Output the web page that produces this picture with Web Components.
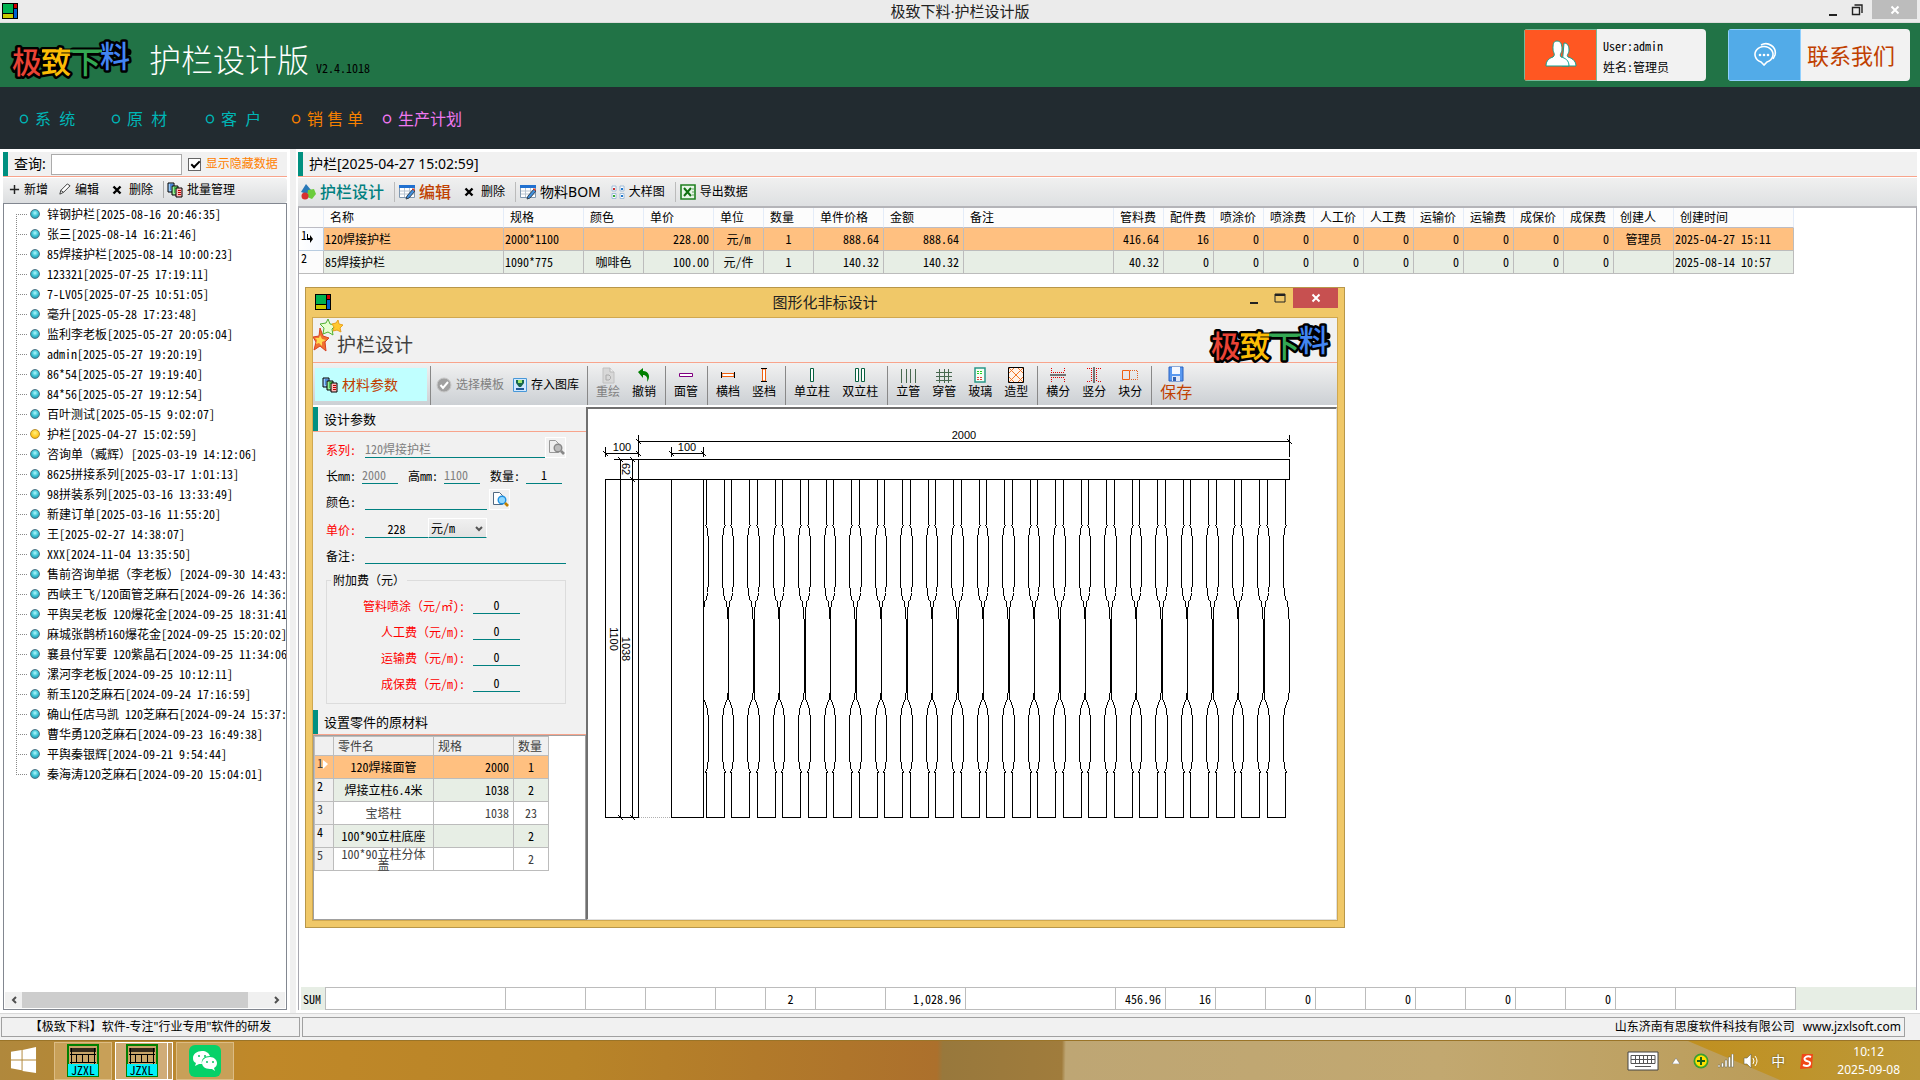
<!DOCTYPE html>
<html lang="zh-CN">
<head>
<meta charset="utf-8">
<title>极致下料·护栏设计版</title>
<style>
    html, body { height: 100%; }
    body {
        margin: 0;
        overflow: hidden;
        background: #fff;
        color: #000;
        font: 12px/16px "Noto Sans", "Noto Sans CJK SC", sans-serif;
        --mono: "Noto Sans Mono CJK SC", "Noto Sans CJK SC", monospace;
        --teal: #009080;
        --salmon: #f8a48c;
        --rust: #c04000;
    }
</style>
</head>
<body>
<jz-app></jz-app>
<script>
const ICONS = {
    app: ['0 0 16 16', '<path fill="#000" d="M0 0h16v16H0z"/><path fill="#00b050" d="M1 1h10v9H1z"/><path fill="#d00000" d="M12 1h3v4h-3z"/><path fill="#0060d0" d="M12 6h3v9h-3z"/><path fill="#c8c800" d="M1 11h10v4H1z"/>'],
    plus: ['0 0 12 12', '<path d="M6 1v10M1 6h10" stroke="#222" stroke-width="1.6"/>'],
    pencil: ['0 0 14 14', '<path d="M2 12l1-4 7-7 3 2-7 7z M3 8l3 2" fill="#fff" stroke="#333"/>'],
    cross: ['-3 0 16 10', '<path d="M1.5 1.5l7 7M8.500 1.500l-7 7" stroke="#000" stroke-width="2.4"/>'],
    batch: ['0 0 16 16', '<g stroke="#000"><path fill="#9cf" d="M1 1h6v9H1z"/><path fill="#9e9" d="M5 4h6v9H5z"/><path fill="#fbb" d="M9 6h6v9H9z"/></g><path d="M3 3h3M3 5h1M3 7h1" stroke="#04a"/><path d="M7 6h3M7 8h1M7 10h1" stroke="#080"/><path d="M11 8.500h3M11 10.500h3M11 12.500h3" stroke="#b00"/>'],
    shapes: ['0 0 16 16', '<path d="M6 0l5 6-4 4-6-2z" fill="#2878b8"/><path d="M8 6l6-1 2 5-4 5-5-2z" fill="#6ccc3c"/><circle cx="5" cy="12" r="3.500" fill="#d83030"/>'],
    sheet: ['0 0 16 16', '<path d="M.5 1.500h15v12H.5z" fill="#fff" stroke="#8098b0"/><path d="M0 1h16v3H0z" fill="#2070d0"/><path d="M1 7h14M1 10h14M5.500 4v9M10.500 4v9" stroke="#b8c4d0"/><path d="M7 15l1-3 6-7 2 2-6 7z" fill="#4090e0" stroke="#345"/><path d="M13 5l1-1 2 2-1 1z" fill="#e84020"/>'],
    dots: ['0 0 14 14', '<g fill="#fff" stroke="#a0bcd8"><path d="M1 1h4v5H1zM9 1h4v5H9zM1 8.500h4v5H1zM9 8.500h4v5H9z"/></g><path d="M2 3h2v2H2z" fill="#c33"/><path d="M10 3h2v2h-2z" fill="#27c"/><path d="M2 10h2v2H2z" fill="#3a3"/><path d="M10 10h2v2h-2z" fill="#27c"/>'],
    excel: ['0 0 16 16', '<path d="M1 1h14v14H1z" fill="#e8f6e8" stroke="#208020" stroke-width="1.600"/><path d="M4 4l7 8M11 4l-7 8" stroke="#107010" stroke-width="2"/><path d="M12 5h2M12 8h2M12 11h2" stroke="#60a060"/>'],
    check: ['0 0 16 16', '<circle cx="8" cy="8" r="7" fill="#a0a0a0" stroke="#c8c8c8"/><path d="M4.500 8l2.500 3 5-6" fill="none" stroke="#fff" stroke-width="2"/>'],
    store: ['0 0 14 16', '<path d="M.5 1.500h13v13H.5z" fill="#d0e8ff" stroke="#4898d8"/><path d="M3 3h8v3l-3 4h-2L3 6z" fill="#186850"/><path d="M5 3h4v3H5z" fill="#a0e870"/><path d="M3 11h8v2H3z" fill="#205898"/>'],
    redraw: ['0 0 18 18', '<path d="M4 2h7l4 4v11H4z" fill="#d8d8d8" stroke="#c0c0c0"/><path d="M11 2v4h4" fill="#eee" stroke="#b8b8b8"/><path d="M7 9h3l1.500 1.500v2L10 14H7z" fill="none" stroke="#aaa"/>'],
    undo: ['0 0 18 18', '<path d="M3 6l5-4v3c6 0 8 6 4 11 1-5-1-7-4-7v3z" fill="#008000"/>'],
    rail: ['0 0 18 18', '<path d="M2.500 7.500h13v3h-13z" fill="#fff" stroke="#800080"/>'],
    hbar: ['0 0 18 18', '<path d="M3 7.500h12v3H3z" fill="#fff" stroke="#f06010"/><path d="M2.500 6v6M15.500 6v6" stroke="#000"/>'],
    vbar: ['0 0 18 18', '<path d="M7.500 3h3v12h-3z" fill="#fff" stroke="#f06010"/><path d="M6 2.500h6M6 15.500h6" stroke="#000"/>'],
    post: ['0 0 18 18', '<path d="M7.500 2.500h3v13h-3z" fill="#fff" stroke="#086040"/>'],
    posts: ['0 0 18 18', '<path d="M4.500 2.500h3v13h-3zM10.500 2.500h3v13h-3z" fill="#fff" stroke="#086040"/>'],
    pipes: ['0 0 18 18', '<path d="M2.500 3v14M7.500 3v14M11.500 3v14M16.500 3v14" stroke="#486850"/>'],
    mesh: ['0 0 18 18', '<path d="M4.500 3v14M9.500 3v14M13.500 3v14M1 6.500h16M1 10.500h16M1 14.500h16" stroke="#486850"/>'],
    glass: ['0 0 18 18', '<path d="M4 2h10v14H4z" fill="#f4fff4" stroke="#289888" stroke-width="1.500"/><path d="M6 5.500h6M6 7.500h6" stroke="#20d020" stroke-dasharray="2 1"/><path d="M6 11.500h6M6 13.500h6" stroke="#e04040" stroke-dasharray="2 1"/>'],
    shape: ['0 0 18 18', '<path d="M1.500 1.500h15v15h-15z" fill="#fff3ea" stroke="#000"/><path d="M2 7l5-5M2 16L16 2M11 16l5-5M11 2l5 5M2 2l14 14M2 11l5 5" stroke="#f07828"/>'],
    hsplit: ['0 0 18 18', '<path d="M2.500 2v4M2 6.500h14M15.500 2v4M2.500 16v-4M2 11.500h14M15.500 16v-4" stroke="#e00000" stroke-dasharray="1 1"/><path d="M1 9h16" stroke="#000"/>'],
    vsplit: ['0 0 18 18', '<path d="M2 2.500h4M6.500 2v14M2 15.500h4M16 2.500h-4M11.500 2v14M16 15.500h-4" stroke="#e00000" stroke-dasharray="1 1"/><path d="M9 1v16" stroke="#000"/>'],
    bsplit: ['0 0 18 18', '<path d="M1.500 4.500h7v9h-7z" fill="none" stroke="#f06010"/><path d="M9 4.500h7.500v9H9" fill="none" stroke="#e06020" stroke-dasharray="1 1"/>'],
    save: ['0 0 16 16', '<path d="M1 1h14v14H1z" fill="#5898f0" stroke="#2860c0"/><path d="M4 1h8v7H4z" fill="#f4f8ff"/><path d="M4 10h8v5H4z" fill="#e0e8f8"/><path d="M5 11h3v4H5z" fill="#3060b0"/>'],
    find: ['0 0 18 18', '<path d="M2.500 1.500h6l3 3v9h-9z" fill="#fff" stroke="#506880"/><circle cx="11" cy="9" r="3.800" fill="#90d8ff" stroke="#2090e0" stroke-width="1.400"/><path d="M14 12l3 3" stroke="#c08000" stroke-width="2.600"/>'],
    findoff: ['0 0 18 18', '<path d="M2.500 1.500h6l3 3v9h-9z" fill="#eee" stroke="#999"/><circle cx="11" cy="9" r="3.800" fill="#bbb" stroke="#888" stroke-width="1.400"/><path d="M14 12l3 3" stroke="#888" stroke-width="2.600"/>'],
    stars: ['0 0 30 34', '<path d="M7 10l3 8 6 2-4 4 1 9-6-5-6 4 2-8-3-5 6-1z" fill="#f07030" stroke="#d84020"/><path d="M7 17l2 4 4 1-4 2v4l-3-3-3 1 1-4-2-2h4z" fill="#ffd850"/><path d="M15 1l2 5 6 1-4 4 1 6-5-3-5 2 1-6-4-4 6-1z" fill="#e8ffd0" stroke="#50b030"/><path d="M25 2l1 4 4 1-3 3 1 4-4-2-4 1 1-4-2-3 4-1z" fill="#ffc830" stroke="#e8a020"/>'],
    users: ['0 0 32 32', '<path d="M19 4c4 0 5 4 5 7 0 4-3 5-1 7 3 1 8 3 8 9H17z" fill="#fff" stroke="#10a090"/><path d="M12 2c4 0 5 4 5 8s-3 5-1 8c4 1 8 3 8 9H1c0-6 4-8 7-9 3-3 0-4 0-8s0-8 4-8z" fill="#fff" stroke="#10a090"/>'],
    chat: ['0 0 26 26', '<g fill="none" stroke="#fff" stroke-width="1.600"><path d="M12 23l-3-3a9 8 0 1 1 6 0z"/><path d="M9 3c7-4 16 2 14 10l-2 4"/></g><g fill="#fff"><circle cx="8" cy="13" r="1.300"/><circle cx="12" cy="13" r="1.300"/><circle cx="16" cy="13" r="1.300"/></g>'],
    windows: ['0 0 28 28', '<path fill="#fff" d="M1 5l11-2v10H1zM13 3l14-3v13H13zM1 14h11v10L1 22zM13 14h14v13l-14-2z"/>'],
    wechat: ['0 0 32 32', '<rect width="32" height="32" rx="6" fill="#06d168"/><path fill="#fff" d="M13 6c-5 0-9 3-9 7 0 3 1 4 3 5l-1 3 4-2h3c-1-5 2-8 8-8-1-3-4-5-8-5z"/><path fill="#fff" d="M21 12c-5 0-8 3-8 6s3 6 8 6h2l3 2-1-3c2-1 3-3 3-5 0-3-3-6-7-6z"/><g fill="#06c060"><circle cx="10" cy="11" r="1"/><circle cx="16" cy="11" r="1"/><circle cx="18" cy="17" r="1"/><circle cx="24" cy="17" r="1"/></g>'],
    fence: ['0 0 32 20', '<path d="M1 21V1h30v20" fill="#c8a468" stroke="#008000" stroke-width="2"/><g stroke="#000" fill="none"><path d="M3 5h26M3 7h26" stroke-width="1.500"/><path d="M3 10.500h26M3 18.500h26M4.500 4v16M9.500 10v9M15.500 10v9M21.500 10v9M27.500 4v16"/></g>'],
    keyboard: ['0 0 32 20', '<path d="M1 1h30v18H1z" fill="#fff" stroke="#444"/><path d="M4 4.500h24v8H4zM4 8.500h24M8.500 4v9M12.500 4v9M16.500 4v9M20.500 4v9M24.500 4v9M8 15.500h16" fill="none" stroke="#555"/>'],
    up: ['0 0 8 6', '<path d="M0 6l4-6 4 6z" fill="#fff" stroke="#666" stroke-width=".5"/>'],
    shield: ['0 0 16 16', '<circle cx="8" cy="8" r="7.500" fill="#38a030"/><circle cx="8" cy="8" r="5.800" fill="#ffe000"/><path d="M8 4v8M4 8h8" stroke="#186018" stroke-width="2"/>'],
    signal: ['0 0 16 14', '<g fill="#fff" stroke="#665" stroke-width=".5"><path d="M0 11h2v2H0zM3.500 9h2v4h-2zM7 6h2v7H7zM10.500 3h2v10h-2zM13.500 0h2v13h-2z"/></g>'],
    volume: ['0 0 16 16', '<path d="M1 5h3l4-4v14l-4-4H1z" fill="#fff" stroke="#665" stroke-width=".6"/><path d="M10 5q2 3 0 6M12 3q4 5 0 10" fill="none" stroke="#fff"/>'],
    sogou: ['0 0 14 16', '<path d="M2 1l11 0-1 14-12 1z" fill="#f04818"/><path d="M11 4C7 2 3 5 5 7s6 1 5 4-5 2-7 1" fill="none" stroke="#fff" stroke-width="2"/>'],
    min: ['0 0 10 14', '<path d="M1 11h8v2H1z" fill="#222"/>'],
    restore: ['0 0 12 12', '<path d="M1.500 3.500h7v7h-7zM3.500 1h7.500v8" fill="none" stroke="#222" stroke-width="1.400"/>'],
    max: ['0 0 12 12', '<path d="M1 2h10v8H1z" fill="none" stroke="#222"/><path d="M1 2h10v2H1z" fill="#222"/>'],
    close: ['0 0 10 10', '<path d="M1.500 1.500l7 7M8.500 1.500l-7 7" stroke="#fff" stroke-width="2"/>'],
};

function icon(name, w = 16, h = w) {
    const [box, body] = ICONS[name];
    return `<svg class="icon" aria-hidden="true" width="${w}" height="${h}" viewBox="${box}">${body}</svg>`;
}

const base = /*css*/`
    * { box-sizing: border-box; }
    svg { display: block; flex: none; }
    button, input, select { font: inherit; color: inherit; margin: 0; border-radius: 0; }
    button { padding: 0; border: 0; background: none; display: flex; align-items: center; justify-content: center; white-space: nowrap; }
    a { color: inherit; text-decoration: none; }
    ul { list-style: none; margin: 0; padding: 0; }
`;

class JzElement extends HTMLElement {
    constructor() {
        super();
        this.attachShadow({ mode: 'open' });
    }
    connectedCallback() {
        const template = document.createElement('template');
        template.innerHTML = `<style>${base}${this.css()}</style>${this.html()}`;
        this.shadowRoot.replaceChildren(template.content.cloneNode(true));
    }
    css() { return ''; }
    html() { return '<slot></slot>'; }
}

class JzLogo extends JzElement {
    css() {
        return /*css*/`
            :host { display: block; }
            svg { overflow: visible; }
            text { font: 500 30px "Noto Sans CJK SC", sans-serif; paint-order: stroke; stroke: #000; stroke-width: 5px; stroke-linejoin: round; }
            .edge { stroke: #000; stroke-width: 7px; stroke-linecap: round; }
            .beam { stroke-width: 3px; }
        `;
    }
    html() {
        return `
            <svg width="124" height="50" viewBox="0 0 124 50">
                <path class="edge" d="M32 18h86"/>
                <text x="2" y="39" fill="#ea4335">极</text>
                <text x="31" y="39" fill="#fbbc05">致</text>
                <text x="61" y="39" fill="#34a853">下</text>
                <text x="90" y="33" fill="#4285f4">料</text>
                <path class="beam" stroke="#fbbc05" d="M32 17h28"/>
                <path class="beam" stroke="#34a853" d="M60 17h32"/>
            </svg>
        `;
    }
}

class JzTitleBar extends JzElement {
    css() {
        const dialog = this.hasAttribute('dialog');
        return /*css*/`
            :host {
                display: grid;
                grid-template-columns: 1fr auto 1fr;
                height: ${dialog ? 29 : 23}px;
                background: ${dialog ? '#f0c868' : '#ebebeb'};
                border-bottom: ${dialog ? 0 : 1}px solid #dcdcdc;
                color: #222;
            }
            .left { padding: ${dialog ? '6px 0 0 3px' : '3px 0 0 2px'}; }
            .name { font-size: 15px; line-height: ${dialog ? 28 : 22}px; }
            .right { display: flex; justify-content: flex-end; }
            button { width: ${dialog ? 26 : 24}px; height: ${dialog ? 20 : 19}px; }
            button:last-child { width: 45px; background: ${dialog ? '#c75050' : '#bcbcbc'}; margin: 0 ${dialog ? 0 : 3}px 0 ${dialog ? 0 : 3}px; }
        `;
    }
    html() {
        const dialog = this.hasAttribute('dialog');
        return `
            <div class="left">${icon('app')}</div>
            <div class="name"><slot></slot></div>
            <div class="right">
                <button aria-label="最小化">${icon('min', 10, 14)}</button>
                <button aria-label="最大化">${icon(dialog ? 'max' : 'restore', 12)}</button>
                <button aria-label="关闭">${icon('close', 10)}</button>
            </div>
        `;
    }
}

class JzHeader extends JzElement {
    css() {
        return /*css*/`
            :host { display: flex; align-items: flex-start; height: 64px; padding: 6px 10px 0; background: #217346; }
            jz-logo { margin: 5px 15px 0 0; }
            h1 { margin: 0; font: 300 32px/58px "Noto Sans CJK SC", sans-serif; color: #fff; }
            .ver { font-family: var(--mono); margin: 31px auto 0 7px; }
            .card {
                display: flex;
                height: 52px;
                border-radius: 4px;
                overflow: hidden;
                background: #f2f2f2;
            }
            .card .pic { display: flex; align-items: center; justify-content: center; width: 73px; height: 52px; border: 1px solid #78b898; }
            .user { width: 182px; margin-right: 22px; }
            .user .pic { background: #ff5722; }
            .user p { margin: 0; padding: 6px; font: 12px/21px var(--mono); }
            .contact { width: 182px; justify-content: flex-start; color: var(--rust); font-size: 22px; }
            .contact .pic { background: #52abe8; border-color: #90d0ff; margin-right: 6px; }
        `;
    }
    html() {
        return `
            <jz-logo></jz-logo>
            <h1>护栏设计版</h1>
            <span class="ver">V2.4.1018</span>
            <div class="card user">
                <span class="pic">${icon('users', 32)}</span>
                <p>User:admin<br>姓名:管理员</p>
            </div>
            <button class="card contact"><span class="pic">${icon('chat', 26)}</span>联系我们</button>
        `;
    }
}

class JzNav extends JzElement {
    css() {
        return /*css*/`
            :host { display: block; background: #222b30; }
            nav {
                display: grid;
                grid-template-columns: 92px 94px 86px 91px auto;
                height: 62px;
                padding: 1px 0 0 20px;
                align-items: center;
                color: #00b5b5;
                font-size: 16px;
            }
            a { display: flex; align-items: center; gap: 7px; white-space: pre; }
            i { font: 8px/16px "Noto Sans CJK SC", sans-serif; -webkit-text-stroke: 1px currentColor; }
            .sale { color: #f78000; }
            .plan { color: #f078f0; }
        `;
    }
    html() {
        return `
            <nav>
                <a href="#sys"><i>○</i>系  统</a>
                <a href="#raw"><i>○</i>原  材</a>
                <a href="#client"><i>○</i>客  户</a>
                <a href="#sale" class="sale"><i>○</i>销 售 单</a>
                <a href="#plan" class="plan"><i>○</i>生产计划</a>
            </nav>
        `;
    }
}

class JzSection extends JzElement {
    css() {
        return /*css*/`
            :host {
                display: flex;
                align-items: center;
                height: 25px;
                padding-left: 11px;
                background: linear-gradient(90deg, var(--teal) 5px, #f1f1f1 5px);
                border-bottom: 1px solid var(--salmon);
                font-size: 14px;
            }
            :host([small]) { font-size: 13px; }
        `;
    }
}

class JzTool extends JzElement {
    css() {
        return /*css*/`
            :host { display: block; }
            button { gap: 4px; height: 100%; }
            :host([stack]) button { flex-direction: column; gap: 0; padding: 2px 6px 0; justify-content: flex-start; }
            button:disabled { color: #808080; }
        `;
    }
    html() {
        const [w, h] = (this.getAttribute('size') || '16').split(',').map(Number);
        const off = this.hasAttribute('disabled') ? 'disabled' : '';
        return `<button ${off}>${icon(this.getAttribute('icon'), w, h || w)}<slot></slot></button>`;
    }
}

const ORDERS = [
    '锌钢护栏[2025-08-16 20:46:35]',
    '张三[2025-08-14 16:21:46]',
    '85焊接护栏[2025-08-14 10:00:23]',
    '123321[2025-07-25 17:19:11]',
    '7-LV05[2025-07-25 10:51:05]',
    '毫升[2025-05-28 17:23:48]',
    '监利李老板[2025-05-27 20:05:04]',
    'admin[2025-05-27 19:20:19]',
    '86*54[2025-05-27 19:19:40]',
    '84*56[2025-05-27 19:12:54]',
    '百叶测试[2025-05-15 9:02:07]',
    '护栏[2025-04-27 15:02:59]',
    '咨询单（臧辉）[2025-03-19 14:12:06]',
    '8625拼接系列[2025-03-17 1:01:13]',
    '98拼装系列[2025-03-16 13:33:49]',
    '新建订单[2025-03-16 11:55:20]',
    '王[2025-02-27 14:38:07]',
    'XXX[2024-11-04 13:35:50]',
    '售前咨询单据（李老板）[2024-09-30 14:43:',
    '西峡王飞/120面管芝麻石[2024-09-26 14:36:',
    '平舆吴老板 120爆花金[2024-09-25 18:31:41',
    '麻城张鹊桥160爆花金[2024-09-25 15:20:02]',
    '襄县付军要 120紫晶石[2024-09-25 11:34:06',
    '漯河李老板[2024-09-25 10:12:11]',
    '新玉120芝麻石[2024-09-24 17:16:59]',
    '确山任店马凯 120芝麻石[2024-09-24 15:37:',
    '曹华勇120芝麻石[2024-09-23 16:49:38]',
    '平舆秦银辉[2024-09-21 9:54:44]',
    '秦海涛120芝麻石[2024-09-20 15:04:01]',
];

class JzTree extends JzElement {
    css() {
        return /*css*/`
            :host {
                display: flex;
                flex-direction: column;
                min-height: 0;
                overflow: hidden;
                border: 1px solid #828790;
                background: #fff;
                font-family: var(--mono);
            }
            ul { flex: 1; min-height: 0; overflow: hidden; }
            li { display: flex; align-items: center; height: 20px; padding-left: 12px; white-space: pre; }
            .stem {
                flex: none;
                width: 12px;
                height: 20px;
                margin-right: 2px;
                background:
                    repeating-linear-gradient(#888 0 1px, transparent 1px 2px) 0 0 / 1px 100% no-repeat,
                    repeating-linear-gradient(90deg, #888 0 1px, transparent 1px 2px) 0 10px / 100% 1px no-repeat;
            }
            li:first-child .stem { background-size: 1px 10px, 100% 1px; background-position: 0 10px, 0 10px; }
            li:last-child .stem { background-size: 1px 10px, 100% 1px; }
            .ball {
                flex: none;
                width: 10px;
                height: 10px;
                margin-right: 7px;
                border: 1px solid #507888;
                border-radius: 5px;
                background: radial-gradient(circle at 4px 3px, #b0f8ff, #38c0d0 50%, #188098);
            }
            .on .ball { border-color: #b89030; background: radial-gradient(circle at 4px 3px, #fff080, #ffc820 60%, #d89000); }
            .bar { display: flex; height: 16px; margin: 0 1px 1px; background: #f0f0f0; }
            .bar button { width: 17px; }
            .bar .thumb { flex: 1; margin-right: 20px; background: #cdcdcd; }
            .bar path { fill: none; stroke: #505050; stroke-width: 2; }
        `;
    }
    html() {
        const rows = ORDERS.map(name => `
            <li class="${name.startsWith('护栏') ? 'on' : ''}"><i class="stem"></i><i class="ball"></i><span>${name}</span></li>`);
        return `
            <ul>${rows.join('')}</ul>
            <div class="bar">
                <button aria-label="向左"><svg width="6" height="8"><path d="M5 1L2 4l3 3"/></svg></button>
                <div class="thumb"></div>
                <button aria-label="向右"><svg width="6" height="8"><path d="M1 1l3 3-3 3"/></svg></button>
            </div>
        `;
    }
}

class JzSidebar extends JzElement {
    css() {
        return /*css*/`
            :host { display: flex; flex-direction: column; }
            label { white-space: nowrap; }
            .query { width: 131px; height: 21px; margin: 0 6px 0 5px; border: 1px solid #ababab; background: #fff; }
            .show { display: flex; align-items: center; gap: 5px; font-size: 12px; color: #ff8000; }
            .show input {
                appearance: none;
                width: 13px;
                height: 13px;
                border: 1px solid #666;
                background: #fff;
            }
            .show input:checked::after { content: ""; display: block; width: 7px; height: 3px; margin: 2px; border: solid #000; border-width: 0 0 2px 2px; transform: rotate(-45deg); }
            .tools { display: flex; height: 25px; margin-top: 1px; padding: 0 0 2px 6px; background: linear-gradient(#f3f3f3, #dcdee0); border-radius: 0 3px 3px 0; }
            .tools jz-tool { margin-right: 10px; }
            .sep { width: 1px; margin: 3px 3px 3px 0; background: #aaa; }
            jz-tree { flex: 1; }
        `;
    }
    html() {
        return `
            <jz-section>
                <label for="q">查询:</label><input id="q" class="query" type="text">
                <label class="show"><input type="checkbox" checked>显示隐藏数据</label>
            </jz-section>
            <div class="tools">
                <jz-tool icon="plus" size="11">新增</jz-tool>
                <jz-tool icon="pencil" size="13">编辑</jz-tool>
                <jz-tool icon="cross" size="16,10">删除</jz-tool>
                <div class="sep"></div>
                <jz-tool icon="batch">批量管理</jz-tool>
            </div>
            <jz-tree></jz-tree>
        `;
    }
}

// [title, width, align]
const COLS = [
    ['名称', 180, 'l'], ['规格', 80, 'l'], ['颜色', 60, 'c'], ['单价', 70, 'r'], ['单位', 50, 'c'],
    ['数量', 50, 'c'], ['单件价格', 70, 'r'], ['金额', 80, 'r'], ['备注', 150, 'l'], ['管料费', 50, 'r'],
    ['配件费', 50, 'r'], ['喷涂价', 50, 'r'], ['喷涂费', 50, 'r'], ['人工价', 50, 'r'], ['人工费', 50, 'r'],
    ['运输价', 50, 'r'], ['运输费', 50, 'r'], ['成保价', 50, 'r'], ['成保费', 50, 'r'], ['创建人', 60, 'c'],
    ['创建时间', 120, 'l'],
];
const ROWS = [
    ['120焊接护栏', '2000*1100', '', '228.00', '元/m', '1', '888.64', '888.64', '', '416.64', '16', 0, 0, 0, 0, 0, 0, 0, 0, '管理员', '2025-04-27 15:11'],
    ['85焊接护栏', '1090*775', '咖啡色', '100.00', '元/件', '1', '140.32', '140.32', '', '40.32', '0', 0, 0, 0, 0, 0, 0, 0, 0, '', '2025-08-14 10:57'],
];
const SUMS = ['', '', '', '', '', '2', '', '1,028.96', '', '456.96', '16', '', 0, '', 0, '', 0, '', 0, '', ''];

const gridCss = /*css*/`
    table { table-layout: fixed; border-spacing: 0; font-family: var(--mono); }
    th, td { padding: 0 4px; border: solid #bcbcbc; border-width: 0 1px 1px 0; font-weight: 400; line-height: 16px; white-space: nowrap; text-align: left; }
    .c { text-align: center; }
    .r { text-align: right; }
    td.l { padding: 0 1px; }
    tbody tr { height: 23px; }
    tbody th { padding: 0 2px; vertical-align: top; line-height: 14px; }
    .sel td { background: #ffc080; }
    .even td { background: #e7eee5; }
`;

class JzGrid extends JzElement {
    css() {
        return gridCss + /*css*/`
            :host { display: flex; flex-direction: column; justify-content: space-between; min-height: 0; border-top: 2px solid #b4b4b8; border-left: 1px solid #a8a8b0; border-right: 1px solid #a8a8b0; }
            table { width: 1495px; flex: none; }
            thead tr { height: 20px; }
            thead th { padding: 0 0 2px 6px; background: #fcfcfc; border-right-color: #e4ecf8; border-bottom-color: #bcbcc4; }
            tbody th { background: #fcfcfc; }
            .sel th { border-color: #b8cce0; background: linear-gradient(90deg, #fff, #f4f8ff); }
            .cur { display: flex; }
            .cur svg { margin-top: 6px; }
            .sum { padding-left: 2px; background: linear-gradient(90deg, #fff 1497px, #e7eee5 1497px); }
            .sum td { border-top: 1px solid #bcbcbc; height: 23px; }
            .sum tbody th { background: #e7eee5; vertical-align: middle; border: 0; border-right: 1px solid #bcbcbc; }
        `;
    }
    html() {
        const cols = '<col style="width:25px">' + COLS.map(c => `<col style="width:${c[1]}px">`).join('');
        const cells = row => row.map((v, i) => `<td class="${COLS[i][2]}">${v}</td>`).join('');
        return `
            <table>
                <colgroup>${cols}</colgroup>
                <thead><tr><th></th>${COLS.map(c => `<th>${c[0]}</th>`).join('')}</tr></thead>
                <tbody>
                    <tr class="sel"><th><div class="cur">1<svg width="6" height="10"><path d="M0 0v6h3v3l3-4-3-4v3H1V0z"/></svg></div></th>${cells(ROWS[0])}</tr>
                    <tr class="even"><th>2</th>${cells(ROWS[1])}</tr>
                </tbody>
            </table>
            <div class="sum">
                <table><colgroup>${cols}</colgroup><tbody><tr><th>SUM</th>${cells(SUMS)}</tr></tbody></table>
            </div>
        `;
    }
}

class JzOrder extends JzElement {
    css() {
        return /*css*/`
            :host { display: flex; flex-direction: column; min-width: 0; }
            .tools { display: flex; height: 28px; margin-top: 1px; padding-left: 2px; background: linear-gradient(#f0f0f0, #dee0e2); }
            .tools jz-tool { margin-right: 10px; }
            .sep { width: 1px; margin: 4px 4px 4px 0; background: #bbb; }
            .big { font-size: 16px; font-weight: 500; color: #008080; }
            .edit { color: var(--rust); }
            .mid { font-size: 14px; }
            jz-grid { flex: 1; }
        `;
    }
    html() {
        return `
            <jz-section>护栏[2025-04-27 15:02:59]</jz-section>
            <div class="tools">
                <jz-tool class="big" icon="shapes">护栏设计</jz-tool>
                <div class="sep"></div>
                <jz-tool class="big edit" icon="sheet">编辑</jz-tool>
                <jz-tool icon="cross" size="16,10">删除</jz-tool>
                <div class="sep"></div>
                <jz-tool class="mid" icon="sheet">物料BOM</jz-tool>
                <jz-tool icon="dots" size="14">大样图</jz-tool>
                <div class="sep"></div>
                <jz-tool icon="excel">导出数据</jz-tool>
            </div>
            <jz-grid></jz-grid>
        `;
    }
}

const PARTS = [
    ['120焊接面管', '2000', '1'],
    ['焊接立柱6.4米', '1038', '2'],
    ['宝塔柱', '1038', '23'],
    ['100*90立柱底座', '', '2'],
    ['<div>100*90立柱分体盖</div>', '', '2'],
];

class JzParams extends JzElement {
    css() {
        return gridCss + /*css*/`
            :host { display: flex; flex-direction: column; background: #f1f1f1; }
            form { padding: 0 13px; font-family: var(--mono); }
            .row { display: flex; align-items: flex-end; height: 26px; }
            .row label { width: 39px; white-space: nowrap; line-height: 17px; }
            .size label { width: 36px; }
            .size input { width: 36px; margin-right: 10px; }
            .size { margin-right: -13px; }
            .price { height: 28px; }
            input { width: 122px; height: 19px; padding: 0; border: 0; border-bottom: 1px solid #008080; background: none; text-align: center; }
            input:disabled { color: #808080; text-align: left; }
            .series { width: 180px; }
            .note { width: 201px; }
            .price input { width: 63px; }
            select { appearance: none; width: 59px; height: 20px; padding: 0 2px; border: 1px solid #fff; border-bottom-color: #008080;
                background: url("data:image/svg+xml,%3Csvg xmlns='http://www.w3.org/2000/svg' width='8' height='6'%3E%3Cpath d='M1 1l3 3 3-3' fill='none' stroke='%23555' stroke-width='2'/%3E%3C/svg%3E") no-repeat 46px 7px, linear-gradient(#f0f0f0, #e2e2e2); }
            .pick { width: 21px; height: 21px; border: 1px solid #fff; margin-left: 2px; }
            .series + .pick { margin-left: 0; }
            .red { color: #f00; }
            fieldset { width: 240px; margin: 8px 0 6px; padding: 0 45px 11px 0; border: 1px solid #dcdcdc; }
            legend { margin-left: 4px; padding: 0 2px; }
            fieldset .row { justify-content: flex-end; }
            fieldset .row label { width: auto; color: #f00; margin-right: 8px; }
            fieldset input { width: 47px; }
            .parts { flex: 1; border: 1px solid #a0a0a0; background: #fff; overflow: hidden; }
            table { width: 234px; color: #404040; border: solid #bcbcbc; border-width: 1px 0 0 1px; }
            thead tr { height: 19px; }
            th { background: #f0f0f0; }
            .sel, .even { color: #000; }
            .sel th { background: #ffc080; color: #404040; }
            .cur { display: flex; align-items: flex-start; }
            .cur path { fill: #fff; }
            .cur svg { margin-top: 4px; }
            td div { height: 22px; white-space: normal; line-height: 11px; }
        `;
    }
    html() {
        const fees = ['管料喷涂（元/㎡):', '人工费（元/m):', '运输费（元/m):', '成保费（元/m):'];
        return `
            <jz-section small>设计参数</jz-section>
            <form>
                <div class="row"><label class="red" for="series">系列:</label><input id="series" class="series" value="120焊接护栏" disabled><button type="button" class="pick" aria-label="选择系列" disabled>${icon('findoff', 18)}</button></div>
                <div class="row size">
                    <label for="w">长mm:</label><input id="w" value="2000" disabled>
                    <label for="h">高mm:</label><input id="h" value="1100" disabled>
                    <label for="n">数量:</label><input id="n" value="1">
                </div>
                <div class="row"><label for="color">颜色:</label><input id="color"><button type="button" class="pick" aria-label="选择颜色">${icon('find', 18)}</button></div>
                <div class="row price"><label class="red" for="price">单价:</label><input id="price" value="228"><select aria-label="单位"><option>元/m</option></select></div>
                <div class="row"><label for="note">备注:</label><input id="note" class="note"></div>
                <fieldset>
                    <legend>附加费（元）</legend>
                    ${fees.map((f, i) => `<div class="row"><label for="f${i}">${f}</label><input id="f${i}" value="0"></div>`).join('')}
                </fieldset>
            </form>
            <jz-section small>设置零件的原材料</jz-section>
            <div class="parts">
                <table>
                    <colgroup><col style="width:19px"><col style="width:100px"><col style="width:80px"><col style="width:35px"></colgroup>
                    <thead><tr><th></th><th>零件名</th><th>规格</th><th>数量</th></tr></thead>
                    <tbody>
                        ${PARTS.map((p, i) => `<tr class="${i === 0 ? 'sel' : i % 2 ? 'even' : ''}">
                            <th>${i ? i + 1 : '<div class="cur">1<svg width="5" height="9"><path d="M0 0l5 4-5 5z"/></svg></div>'}</th>
                            <td class="c">${p[0]}</td><td class="r">${p[1]}</td><td class="c">${p[2]}</td></tr>`).join('')}
                    </tbody>
                </table>
            </div>
        `;
    }
}

class JzCanvas extends JzElement {
    css() {
        return /*css*/`
            :host { display: block; overflow: hidden; background: #fff; border: 1px solid #e0e0e0; border-top: 2px solid #707070; border-left: 2px solid #707070; }
            path, rect { fill: none; stroke: #000; shape-rendering: crispEdges; }
            .faint { stroke: #b0b0b0; stroke-dasharray: 1 1; }
            text { font: 11px "Liberation Sans", sans-serif; text-anchor: middle; }
        `;
    }
    // half-widths of one turned baluster, from top to bottom
    baluster(c) {
        const prof = [
            [479, 9], [524, 9], [525, 10], [528, 8], [542, 7], [582, 7], [592, 8], [599, 9], [601, 11],
            [612, 12], [624, 13], [642, 13], [668, 13], [688, 13], [698, 12], [703, 10], [709, 8], [720, 7],
            [755, 7], [768, 8], [771, 10], [773, 9], [817, 9],
        ];
        const right = prof.map(([y, w]) => `${c + w} ${y}.5`);
        const left = prof.map(([y, w]) => `${c - w + (w === 13 ? 1 : 0)} ${y}.5`).reverse();
        return `<path d="M${right.join('L')}L${left.join('L')}"/>`;
    }
    tick(x, y) {
        return `M${x - 2} ${y - 2}l5 5`;
    }
    html() {
        let bars = '';
        for (let i = 0; i < 23; i++) bars += this.baluster(Math.floor(715 + i * 25.5) + 0.5);
        const ticks = [[638, 441], [1289, 441], [605, 453], [638, 453], [671, 453], [703, 453], [620, 459], [632, 459], [632, 479], [620, 817], [632, 817]];
        return `
            <svg width="748" height="510" viewBox="588 409 748 510">
                <rect x="638.5" y="459.5" width="651" height="20"/>
                <path d="M638.5 435v22M1289.500 435v22M638 441.500h651M605.500 447v10M638 453.500h-32M671.500 447v10M703.500 447v10M671 453.500h32M614 459.500h24"/>
                <path d="M605.500 480v337.500h33V459M605 479.500h33M620.500 459v358M632.500 459v358"/>
                <path d="M671.500 480v337.500h32V480"/>
                <path class="faint" d="M639 817.500h32"/>
                <path d="${ticks.map(t => this.tick(...t)).join('')}"/>
                ${bars}
                <text x="964" y="439">2000</text>
                <text x="622" y="451">100</text>
                <text x="687" y="451">100</text>
                <text transform="translate(622 469) rotate(90)">62</text>
                <text transform="translate(610 639) rotate(90)">1100</text>
                <text transform="translate(622 649) rotate(90)">1038</text>
            </svg>
        `;
    }
}

class JzDialog extends JzElement {
    css() {
        return /*css*/`
            :host {
                display: flex;
                flex-direction: column;
                padding: 0 6px 6px;
                border: 1px solid #b8974a;
                background: #f0c868;
            }
            .inner { flex: 1; display: flex; flex-direction: column; min-height: 0; border: 1px solid #d0a850; background: #fff; }
            header { display: flex; height: 45px; padding-right: 4px; background: #f1f1f1; border-bottom: 1px solid var(--salmon); }
            h2 { margin: 8px auto 0 -6px; font-size: 19px; line-height: 38px; font-weight: 400; color: #404040; }
            .bar { display: flex; height: 42px; margin-bottom: 2px; padding: 1px 0 0 2px; background: linear-gradient(#f1f1f1, #ccd0d4); }
            .bar .sep { width: 1px; margin: 2px 2px 0 3px; background: #888; }
            .mat { width: 112px; margin: 4px 0; padding: 0 7px; background: #c0ffff; color: var(--rust); font-size: 14px; }
            .pick { margin: 0 7px 0 3px; }
            .store { margin: 0 5px 0 2px; }
            .save { font-size: 16px; line-height: 21px; color: var(--rust); }
            .body { flex: 1; display: grid; grid-template-columns: 273px 1fr; min-height: 0; }
        `;
    }
    html() {
        const groups = [
            [['redraw', '重绘', 'disabled'], ['undo', '撤销']],
            [['rail', '面管']],
            [['hbar', '横档'], ['vbar', '竖档']],
            [['post', '单立柱'], ['posts', '双立柱']],
            [['pipes', '立管'], ['mesh', '穿管'], ['glass', '玻璃'], ['shape', '造型']],
            [['hsplit', '横分'], ['vsplit', '竖分'], ['bsplit', '块分']],
        ];
        const sep = '<div class="sep"></div>';
        const tools = groups.map(g => g.map(([ic, name, off = '']) => `<jz-tool stack icon="${ic}" size="18" ${off}>${name}</jz-tool>`).join(''));
        return `
            <jz-titlebar dialog>图形化非标设计</jz-titlebar>
            <div class="inner">
                <header>${icon('stars', 30, 34)}<h2>护栏设计</h2><jz-logo></jz-logo></header>
                <div class="bar">
                    <jz-tool class="mat" icon="batch">材料参数</jz-tool>${sep}
                    <jz-tool class="pick" icon="check" disabled>选择模板</jz-tool>
                    <jz-tool class="store" icon="store" size="14,16">存入图库</jz-tool>${sep}
                    ${tools.join(sep)}${sep}
                    <jz-tool stack class="save" icon="save" size="16">保存</jz-tool>
                </div>
                <div class="body">
                    <jz-params></jz-params>
                    <jz-canvas></jz-canvas>
                </div>
            </div>
        `;
    }
}

class JzStatus extends JzElement {
    css() {
        return /*css*/`
            :host { display: grid; grid-template-columns: 299px 1fr; gap: 2px; height: 27px; padding: 3px 15px 3px 1px; border-top: 1px solid #d8d8d8; background: #f1f1f1; }
            div { display: flex; align-items: center; border: 1px solid #a0a0a0; white-space: nowrap; }
            .tip { justify-content: center; }
            .corp { justify-content: flex-end; gap: 8px; padding-right: 3px; }
        `;
    }
    html() {
        return `
            <div class="tip">【极致下料】软件-专注"行业专用"软件的研发</div>
            <div class="corp"><span>山东济南有思度软件科技有限公司</span><span>www.jzxlsoft.com</span></div>
        `;
    }
}

class JzTaskbar extends JzElement {
    css() {
        return /*css*/`
            :host {
                display: flex;
                align-items: center;
                height: 40px;
                position: relative;
                border-top: 1px solid #9a7428;
                background: linear-gradient(91deg, #b0883c 0, #c08828 14%, #b88428 30%, #ac702c 48.800%, #98783c 49.100%, #a07c3c 55.300%, #bea674 55.500%, #c2a870 75%, #b89850 100%);
            }
            :host::before { content: ""; position: absolute; inset: 0 0 0 auto; width: 232px; background: linear-gradient(90deg, #c09020, #bc9838); clip-path: polygon(0 0, 100% 0, 100% 100%, 92px 100%); }
            .start { width: 54px; padding-right: 7px; }
            .task { width: 58px; height: 38px; margin-right: 3px; border: 1px solid #dcbc84; background: #c8a058; flex-direction: column; }
            .task.on { padding-right: 5px; border-color: #fff; background: #d0ac78; box-shadow: inset -4px 0 #c0985c, inset -5px 0 #fff; }
            .task b { width: 32px; background: #00f0f8; border: 1px solid #008000; border-top: 0; font: 400 12px/12px var(--mono); }
            .tray { display: flex; align-items: center; gap: 9px; margin-left: auto; padding-right: 20px; color: #fff; position: relative; }
            .wide { margin-right: 4px; }
            .ime { font-size: 14px; margin: 0 6px 0 3px; text-shadow: 0 0 2px #443; }
            time { margin-left: 14px; text-align: center; line-height: 18px; }
        `;
    }
    html() {
        return `
            <button class="start" aria-label="开始">${icon('windows', 27)}</button>
            <button class="task">${icon('fence', 32, 20)}<b>JZXL</b></button>
            <button class="task on">${icon('fence', 32, 20)}<b>JZXL</b></button>
            <button class="task" aria-label="微信">${icon('wechat', 32)}</button>
            <div class="tray">
                <span class="wide">${icon('keyboard', 32, 20)}</span>
                <span class="wide">${icon('up', 8, 6)}</span>
                ${icon('shield')}${icon('signal', 16, 14)}${icon('volume')}
                <span class="ime">中</span>${icon('sogou', 14, 16)}
                <time>10:12<br>2025-09-08</time>
            </div>
        `;
    }
}

class JzApp extends JzElement {
    css() {
        return /*css*/`
            :host { display: flex; flex-direction: column; height: 100vh; }
            main {
                flex: 1;
                min-height: 0;
                display: grid;
                grid-template-columns: 284px minmax(0, 1fr);
                gap: 11px;
                padding: 3px 3px;
                background: linear-gradient(90deg, transparent 290px, #f0f0f0 290px 296px, transparent 296px);
            }
            jz-sidebar, jz-order { min-height: 0; }
            jz-dialog { position: absolute; left: 305px; top: 287px; width: 1040px; height: 641px; }
        `;
    }
    html() {
        return `
            <jz-titlebar>极致下料·护栏设计版</jz-titlebar>
            <jz-header></jz-header>
            <jz-nav></jz-nav>
            <main>
                <jz-sidebar></jz-sidebar>
                <jz-order></jz-order>
            </main>
            <jz-status></jz-status>
            <jz-taskbar></jz-taskbar>
            <jz-dialog></jz-dialog>
        `;
    }
}

customElements.define('jz-logo', JzLogo);
customElements.define('jz-titlebar', JzTitleBar);
customElements.define('jz-header', JzHeader);
customElements.define('jz-nav', JzNav);
customElements.define('jz-section', JzSection);
customElements.define('jz-tool', JzTool);
customElements.define('jz-tree', JzTree);
customElements.define('jz-sidebar', JzSidebar);
customElements.define('jz-grid', JzGrid);
customElements.define('jz-order', JzOrder);
customElements.define('jz-params', JzParams);
customElements.define('jz-canvas', JzCanvas);
customElements.define('jz-dialog', JzDialog);
customElements.define('jz-status', JzStatus);
customElements.define('jz-taskbar', JzTaskbar);
customElements.define('jz-app', JzApp);
</script>
</body>
</html>
